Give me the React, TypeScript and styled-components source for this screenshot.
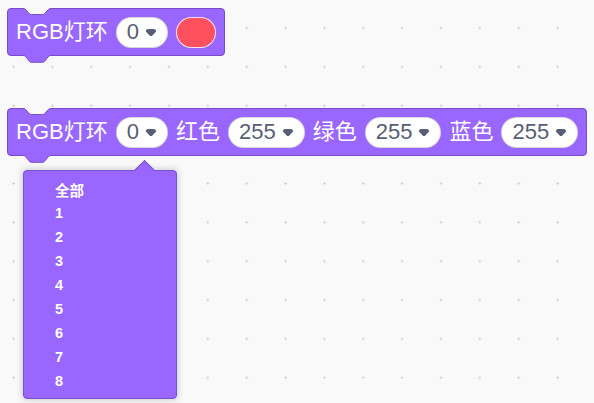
import React from "react";
import styled, { createGlobalStyle } from "styled-components";

const Global = createGlobalStyle`
  html, body {
    margin: 0;
    padding: 0;
    background-color: #f9f9f9;
  }
  body {
    min-height: 100vh;
    background-image: radial-gradient(circle, #d6d6d6 0 1px, transparent 1.4px);
    background-size: 38.87px 38.87px;
    background-position: -5.9px 8.6px;
    font-family: "Liberation Sans", "Noto Sans CJK SC", Arial, sans-serif;
  }
`;

const Canvas = styled.div`
  display: flex;
  flex-direction: column;
  align-items: flex-start;
  gap: 52px;
  padding: 8px 0 0 7px;
`;

const BlockWrap = styled.div`
  position: relative;
`;

const Block = styled.div`
  position: relative;
  box-sizing: border-box;
  height: 48px;
  display: flex;
  align-items: center;
  gap: 8px;
  padding: 0 8px;
  background: #9966ff;
  border: 1px solid #774dcb;
  border-radius: 4px;
  color: #fff;
  font-size: 22px;
  font-family: "Liberation Sans", "Noto Sans CJK SC", Arial, sans-serif;
  white-space: nowrap;
`;

const Label = styled.span`
  line-height: 1;
`;

const ShapeSvg = styled.svg<{ $edge: "top" | "bottom" }>`
  position: absolute;
  left: 15px;
  ${(p) => (p.$edge === "top" ? "top: -1px;" : "bottom: -8px;")}
  width: 28px;
  height: 8px;
  overflow: visible;
`;

const Pill = styled.div`
  box-sizing: border-box;
  height: 31px;
  display: flex;
  align-items: center;
  gap: 7px;
  padding: 0 11px 0 10px;
  background: #fff;
  border: 1px solid rgba(0, 0, 0, 0.15);
  border-radius: 16px;
  color: #575e75;
  font-size: 22px;
`;

const Swatch = styled.div`
  box-sizing: border-box;
  width: 40px;
  height: 31px;
  border-radius: 16px;
  background: #ff5060;
  border: 1px solid rgba(255, 255, 255, 0.85);
`;

const Menu = styled.div`
  position: absolute;
  left: 16px;
  top: 62px;
  box-sizing: border-box;
  width: 154px;
  padding: 6px 0 5px;
  background: #9966ff;
  border: 1px solid #7a52d1;
  border-radius: 4px;
  box-shadow: 0 0 6px 1px rgba(0, 0, 0, 0.18);
  &::before {
    content: "";
    position: absolute;
    left: 113px;
    top: -8px;
    width: 14px;
    height: 14px;
    background: #9966ff;
    border-top: 1px solid #7a52d1;
    border-left: 1px solid #7a52d1;
    transform: rotate(45deg);
  }
`;

const MenuItem = styled.div`
  position: relative;
  height: 24px;
  display: flex;
  align-items: center;
  padding-left: 31px;
  color: #fff;
  font-weight: bold;
  font-size: 14.5px;
  font-family: "Liberation Sans", "Noto Sans CJK SC", Arial, sans-serif;
`;

const ARROW_D =
  "M12.71 2.44 A2.41 2.41 0 0 1 12 4.16 L8.08 8.08 a2.45 2.45 0 0 1 -3.45 0 L0.72 4.16 A2.42 2.42 0 0 1 0 2.44 A2.48 2.48 0 0 1 0.71 0.71 C1 0.47 1.43 0 6.36 0 S11.75 0.46 12 0.71 A2.44 2.44 0 0 1 12.71 2.44 Z";

const Arrow = () => (
  <svg width="10" height="7" viewBox="0 0 12.71 8.79">
    <path fill="#575e75" d={ARROW_D} />
  </svg>
);

const curve = "C1.5,0.5 2.2,1.1 3,1.9 L5.6,4.8 C6.3,5.6 7,6.5 8.5,6.5 H19.5 C21,6.5 21.7,5.6 22.4,4.8 L25,1.9 C25.8,1.1 26.5,0.5 28,0.5";

const Notch = () => (
  <ShapeSvg $edge="top" viewBox="0 0 28 8">
    <path fill="#f9f9f9" d={`M0,0 L0,0.5 ${curve} L28,0 Z`} />
    <path fill="none" stroke="#774dcb" strokeWidth="1" d={`M0,0.5 ${curve}`} />
  </ShapeSvg>
);

const tabCurve = "C1.5,0.5 2.2,1.2 3,2 L5.6,5.4 C6.3,6.3 7,7.3 8.5,7.3 H19.5 C21,7.3 21.7,6.3 22.4,5.4 L25,2 C25.8,1.2 26.5,0.5 28,0.5";

const Tab = () => (
  <ShapeSvg $edge="bottom" viewBox="0 0 28 8">
    <path fill="#9966ff" d={`M0,0 L0,0.5 ${tabCurve} L28,0 Z`} />
    <path fill="none" stroke="#774dcb" strokeWidth="1" d={`M0,0.5 ${tabCurve}`} />
  </ShapeSvg>
);

const Dropdown = ({ value }: { value: string }) => (
  <Pill>
    <Label>{value}</Label>
    <Arrow />
  </Pill>
);

const items = ["全部", "1", "2", "3", "4", "5", "6", "7", "8"];

export default function App() {
  return (
    <>
      <Global />
      <Canvas>
        <BlockWrap>
          <Block>
            <Notch />
            <Label>RGB灯环</Label>
            <Dropdown value="0" />
            <Swatch />
            <Tab />
          </Block>
        </BlockWrap>
        <BlockWrap>
          <Block>
            <Notch />
            <Label>RGB灯环</Label>
            <Dropdown value="0" />
            <Label>红色</Label>
            <Dropdown value="255" />
            <Label>绿色</Label>
            <Dropdown value="255" />
            <Label>蓝色</Label>
            <Dropdown value="255" />
            <Tab />
          </Block>
          <Menu>
            {items.map((it) => (
              <MenuItem key={it}>{it}</MenuItem>
            ))}
          </Menu>
        </BlockWrap>
      </Canvas>
    </>
  );
}
